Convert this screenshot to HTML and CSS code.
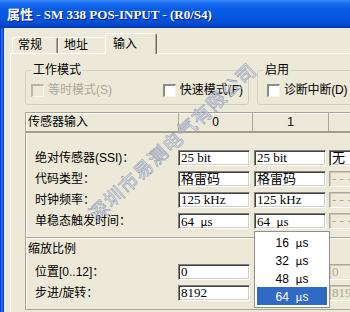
FILE: index.html
```html
<!DOCTYPE html>
<html lang="zh-CN">
<head>
<meta charset="utf-8">
<title>属性 - SM 338 POS-INPUT</title>
<link rel="stylesheet" href="styles.css">
</head>
<body>
<div class="window">
  <div class="titlebar"><span class="title">属性 - SM 338 POS-INPUT - (R0/S4)</span></div>
  <div class="frame">
    <div class="frame-left"></div>
    <div class="client">
      <div class="tabs">
        <div class="tab tab-1">常规</div>
        <div class="tab tab-2">地址</div>
        <div class="tab active">输入</div>
      </div>
      <div class="panel">
        <div class="groups">
          <fieldset class="group group-mode">
            <legend>工作模式</legend>
            <div class="check-row">
              <div class="check disabled wide"><span class="box"></span>等时模式(S)</div>
              <div class="check"><span class="box"></span>快速模式(F)</div>
            </div>
          </fieldset>
          <fieldset class="group group-enable">
            <legend>启用</legend>
            <div class="check-row">
              <div class="check"><span class="box"></span>诊断中断(D)</div>
            </div>
          </fieldset>
        </div>
        <div class="sensor">
          <div class="sensor-head">
            <div class="hcell first">传感器输入</div>
            <div class="hcell c2">0</div>
            <div class="hcell c3">1</div>
            <div class="hcell c4"></div>
          </div>
          <div class="grid top">
            <div class="label">绝对传感器(SSI)：</div>
            <div class="cell"><div class="field">25 bit</div></div>
            <div class="cell"><div class="field">25 bit</div></div>
            <div class="cell"><div class="field">无</div></div>

            <div class="label">代码类型：</div>
            <div class="cell"><div class="field">格雷码</div></div>
            <div class="cell"><div class="field">格雷码</div></div>
            <div class="cell"><div class="field off">- - -</div></div>

            <div class="label">时钟频率：</div>
            <div class="cell"><div class="field">125 kHz</div></div>
            <div class="cell"><div class="field">125 kHz</div></div>
            <div class="cell"><div class="field off">- - -</div></div>

            <div class="label">单稳态触发时间：</div>
            <div class="cell"><div class="field">64&nbsp; <span class="mu">μ</span>s</div></div>
            <div class="cell open">
              <div class="field">64&nbsp; <span class="mu">μ</span>s</div>
              <div class="dropdown">
                <div class="opt">16&nbsp; <span class="mu">μ</span>s</div>
                <div class="opt">32&nbsp; <span class="mu">μ</span>s</div>
                <div class="opt">48&nbsp; <span class="mu">μ</span>s</div>
                <div class="opt selected">64&nbsp; <span class="mu">μ</span>s</div>
              </div>
            </div>
            <div class="cell"><div class="field off">- - -</div></div>
          </div>
          <div class="section-title">缩放比例</div>
          <div class="grid bottom">
            <div class="label">位置[0..12]：</div>
            <div class="cell"><div class="field">0</div></div>
            <div class="cell"><div class="field"></div></div>
            <div class="cell"><div class="field off">0</div></div>

            <div class="label">步进/旋转：</div>
            <div class="cell"><div class="field">8192</div></div>
            <div class="cell"><div class="field"></div></div>
            <div class="cell"><div class="field off">819</div></div>
          </div>
        </div>
      </div>
    </div>
  </div>
  <div class="watermark">深圳市易测电气有限公司</div>
</div>
</body>
</html>
```

FILE: styles.css
```css
html, body {
  margin: 0;
  padding: 0;
}

body {
  background: #ECE9D8;
  font-family: "Liberation Sans", "Noto Sans CJK SC", sans-serif;
  font-size: 12px;
  color: #000;
}

.window {
  position: relative;
  width: 350px;
  height: 312px;
  overflow: hidden;
  display: flex;
  flex-direction: column;
  background: #ECE9D8;
}

.titlebar {
  height: 28px;
  flex: none;
  box-sizing: border-box;
  padding: 2px 0 0 7px;
  display: flex;
  align-items: center;
  background: linear-gradient(to bottom, #3B8CF6 0, #1E6FF0 3px, #0A5DE6 8px, #0455E0 18px, #0349CF 25px, #0335A6 28px);
}

.title {
  color: #fff;
  font: bold 13px/16px "Liberation Serif", "Noto Sans CJK SC", serif;
  text-shadow: 1px 1px 0 #0A1B7A;
  white-space: nowrap;
}

.frame {
  flex: 1;
  display: flex;
  min-height: 0;
}

.frame-left {
  width: 4px;
  flex: none;
  background: linear-gradient(to right, #0831D9 0, #0831D9 1px, #166AEE 1px, #166AEE 3px, #0845CC 3px);
}

.client {
  flex: 1;
  min-width: 0;
  display: flex;
  flex-direction: column;
  padding-left: 6px;
}

.tabs {
  height: 25px;
  flex: none;
  display: flex;
  align-items: flex-end;
  padding-left: 2px;
}

.tab {
  box-sizing: border-box;
  height: 16px;
  line-height: 15px;
  padding-left: 5px;
  border-top: 1px solid #fff;
  border-left: 1px solid #fff;
  border-right: 1px solid #716F64;
  border-radius: 2px 2px 0 0;
  box-shadow: inset -1px 0 0 #ACA899;
  background: #ECE9D8;
  white-space: nowrap;
}

.tab-1 { width: 46px; }
.tab-2 { width: 49px; }

.tab.active {
  position: relative;
  z-index: 1;
  width: 52px;
  height: 21px;
  margin-left: -2px;
  margin-bottom: -1px;
  padding-left: 7px;
  padding-top: 2px;
  line-height: 16px;
}

.panel {
  flex: 1;
  border-top: 1px solid #fff;
  border-left: 1px solid #fff;
  padding: 8px 0 0 14px;
  min-width: 0;
}

.groups {
  display: flex;
  gap: 8px;
}

.group {
  margin: 0;
  padding: 4px 5px 6px;
  border: 1px solid #D0D0BF;
  border-radius: 3px;
  flex: none;
  min-width: 0;
}

.group-mode { width: 224px; box-sizing: border-box; }
.group-enable { width: 120px; box-sizing: border-box; }

.group legend {
  padding: 0 2px;
  line-height: 16px;
  font-size: 12px;
}

.check-row {
  display: flex;
  align-items: center;
  height: 16px;
}

.group-enable .check-row { padding-left: 4px; }

.check {
  display: flex;
  align-items: center;
  gap: 4px;
  line-height: 16px;
  white-space: nowrap;
}

.group-enable .check { letter-spacing: -0.2px; }

.check.wide { width: 133px; }

.box {
  box-sizing: border-box;
  width: 13px;
  height: 13px;
  border-style: solid;
  border-width: 2px 1px 1px 2px;
  border-color: #8D8C84 #F4F3EE #F4F3EE #8D8C84;
  background: #fff;
  flex: none;
}

.check.disabled { color: #ACA899; }
.check.disabled .box {
  background: #ECE9D8;
  border-color: #B9B7AC #F7F6F1 #F7F6F1 #B9B7AC;
}

.sensor {
  margin-top: 7px;
  width: 420px;
  border-top: 1px solid #A7A596;
  border-left: 1px solid #A7A596;
  border-bottom: 1px solid #A7A596;
  box-shadow: inset 1px 1px 0 #fff;
}

.sensor-head {
  display: flex;
  height: 18px;
  border-bottom: 2px solid #A29F8F;
  line-height: 18px;
}

.hcell {
  box-sizing: border-box;
  border-right: 1px solid #ACA899;
  text-align: center;
  white-space: nowrap;
}

.hcell.first { width: 153px; text-align: left; padding-left: 2px; }
.hcell.c2 { width: 74px; }
.hcell.c3 { width: 76px; }
.hcell.c4 { flex: 1; border-right: none; }

.grid {
  display: grid;
  grid-template-columns: 152px 76px 75px 90px;
  grid-auto-rows: 16px;
  row-gap: 5px;
  align-items: center;
}

.grid.top { padding-top: 17px; }
.grid.bottom { padding-top: 7px; padding-bottom: 8px; }

.label {
  padding-left: 9px;
  line-height: 16px;
  white-space: nowrap;
}

.cell {
  position: relative;
  height: 16px;
}

.field {
  box-sizing: border-box;
  width: 72px;
  height: 16px;
  padding: 0 2px 0 2px;
  border: 1px solid;
  border-color: #808080 #fff #fff #808080;
  box-shadow: inset 1px 1px 0 #404040, inset -1px -1px 0 #D4D0C8;
  background: #fff;
  font: 13px/14px "Liberation Serif", "Noto Sans CJK SC", serif;
  white-space: nowrap;
  overflow: hidden;
}

.field.off {
  background: #ECE9D8;
  color: #ACA899;
  border-color: #ACA899 #fff #fff #ACA899;
  box-shadow: inset 1px 1px 0 #C9C6B6, inset -1px -1px 0 #ECE9D8;
}

.mu {
  font-family: "Noto Sans CJK SC", sans-serif;
  font-size: 11px;
}

.section-title {
  margin-top: 8px;
  border-top: 1px solid #ACA899;
  box-shadow: inset 0 1px 0 #fff;
  padding: 3px 0 0 2px;
  line-height: 16px;
}

.dropdown {
  position: absolute;
  z-index: 2;
  left: 0;
  top: calc(100% + 2px);
  box-sizing: border-box;
  width: 76px;
  padding: 1px 2px 2px;
  background: #fff;
  border: 1px solid #8E8F8F;
}

.opt {
  height: 18px;
  text-align: center;
  font: 12px/18px "Liberation Sans", "Noto Sans CJK SC", sans-serif;
  white-space: nowrap;
}

.opt.selected {
  background: #316AC5;
  color: #fff;
}

.watermark {
  position: absolute;
  z-index: 3;
  left: 60px;
  top: 131px;
  width: 224px;
  text-align: center;
  font: 19px/20px "Noto Sans CJK SC", sans-serif;
  letter-spacing: 1px;
  white-space: nowrap;
  color: rgba(255, 255, 255, 0.65);
  -webkit-text-stroke: 0.8px rgba(100, 115, 160, 0.6);
  transform: rotate(-43deg);
  pointer-events: none;
}
```
